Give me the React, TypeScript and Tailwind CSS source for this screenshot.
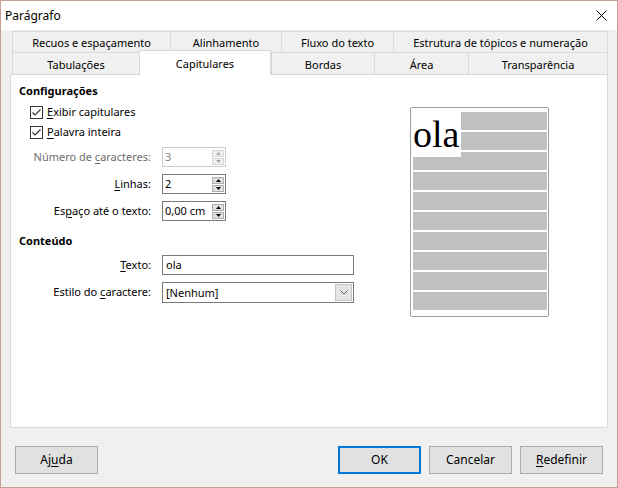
import React from 'react';

const row1 = [
  { label: 'Recuos e espaçamento', w: 'w-[158px]' },
  { label: 'Alinhamento', w: 'w-[111px]' },
  { label: 'Fluxo do texto', w: 'w-[112px]' },
  { label: 'Estrutura de tópicos e numeração', w: 'w-[215px]' }
];

const row2 = [
  { label: 'Tabulações', w: 'w-[127px]' },
  { label: 'Capitulares', w: 'w-[132px]', active: true },
  { label: 'Bordas', w: 'w-[103px]' },
  { label: 'Área', w: 'w-[94px]' },
  { label: 'Transparência', w: 'w-[140px]' }
];

function Arrow({ up, disabled }: { up?: boolean; disabled?: boolean }) {
  return (
    <svg width="5" height="3" viewBox="0 0 5 3">
      <path
        d={up ? 'M0 3 L2.5 0 L5 3 Z' : 'M0 0 L2.5 3 L5 0 Z'}
        fill={disabled ? '#a8a8a8' : '#000'}
      />
    </svg>
  );
}

function Spin({ value, disabled }: { value: string; disabled?: boolean }) {
  const half = disabled
    ? 'flex h-[7px] items-center justify-center border border-[#d5d5d5] bg-[#f0f0f0]'
    : 'flex h-[7px] items-center justify-center border border-[#adadad] bg-[#e1e1e1]';
  return (
    <div
      className={
        disabled
          ? 'flex h-[20px] w-[64px] border border-[#cccccc] bg-white text-[#838383]'
          : 'flex h-[20px] w-[64px] border border-[#7a7a7a] bg-white'
      }
    >
      <span className="flex-1 pl-[2px] leading-[18px]">{value}</span>
      <div className="flex w-[13px] flex-col justify-center gap-[1px] pr-[1px]">
        <div className={half}>
          <Arrow up disabled={disabled} />
        </div>
        <div className={half}>
          <Arrow disabled={disabled} />
        </div>
      </div>
    </div>
  );
}

function Check({ children }: { children: React.ReactNode }) {
  return (
    <div className="flex h-[20px] items-center gap-[4px] pl-[11px]">
      <div className="flex h-[13px] w-[13px] items-center justify-center border border-[#333] bg-white">
        <svg width="11" height="11" viewBox="0 0 11 11">
          <path d="M1.5 5.5 L4 8 L9.5 2.5" fill="none" stroke="#333" strokeWidth="1.2" />
        </svg>
      </div>
      <span>{children}</span>
    </div>
  );
}

function Field({
  label,
  children,
  className,
  muted
}: {
  label: React.ReactNode;
  children: React.ReactNode;
  className: string;
  muted?: boolean;
}) {
  return (
    <div className={'flex items-center ' + className}>
      <span
        className={
          muted
            ? 'w-[132px] text-right text-[#6d6d6d]'
            : 'w-[132px] text-right'
        }
      >
        {label}
      </span>
      <div className="ml-[11px]">{children}</div>
    </div>
  );
}

function Button({
  children,
  primary
}: {
  children: React.ReactNode;
  primary?: boolean;
}) {
  return (
    <div
      className={
        primary
          ? 'flex h-[28px] w-[83px] items-center justify-center border-2 border-[#0078d7] bg-[#e1e1e1]'
          : 'flex h-[28px] w-[83px] items-center justify-center border border-[#adadad] bg-[#e1e1e1]'
      }
    >
      {children}
    </div>
  );
}

const bars = [0, 1, 2, 3, 4, 5, 6, 7, 8, 9];

export default function App() {
  return (
    <div className="flex h-[488px] w-[618px] flex-col border border-[#c6a097] bg-[#f0f0f0] font-['Noto_Sans',sans-serif] text-[11px] text-black">
      {/* title bar */}
      <div className="flex h-[29px] shrink-0 items-center justify-between bg-white pl-[4px] pr-[10px] text-[12px]">
        <span>Parágrafo</span>
        <svg width="11" height="11" viewBox="0 0 11 11">
          <path d="M0.5 0.5 L10.5 10.5 M10.5 0.5 L0.5 10.5" stroke="#000" strokeWidth="1" />
        </svg>
      </div>

      <div className="px-[9px] pt-[1px]">
        {/* tabs */}
        <div className="ml-[2px] flex h-[21px]">
          {row1.map((t, i) => (
            <div
              key={t.label}
              className={
                (i === row1.length - 1 ? 'border-r ' : '') +
                'flex items-center justify-center border-l border-t border-[#d9d9d9] pt-[3px] ' +
                t.w
              }
            >
              {t.label}
            </div>
          ))}
        </div>
        <div className="ml-[2px] flex h-[22px]">
          {row2.map((t, i) =>
            t.active ? (
              <div
                key={t.label}
                className={
                  'relative z-10 -mb-px -mt-[2px] flex h-[25px] items-start justify-center border-x border-t border-[#d9d9d9] bg-white pt-[5px] ' +
                  t.w
                }
              >
                {t.label}
              </div>
            ) : (
              <div
                key={t.label}
                className={
                  (i === row2.length - 1 ? 'border-r ' : '') +
                  'flex items-center justify-center border-l border-t border-[#d9d9d9] pt-[3px] ' +
                  t.w
                }
              >
                {t.label}
              </div>
            )
          )}
        </div>

        {/* panel */}
        <div className="flex h-[354px] border border-[#d9d9d9] bg-white">
          <div className="flex w-[399px] flex-col pl-[8px] pt-[8px]">
            <div className="h-[16px] font-bold leading-[16px]">Configurações</div>
            <div className="mt-[3px]">
              <Check>
                <span className="underline underline-offset-2">E</span>xibir capitulares
              </Check>
              <Check>
                <span className="underline underline-offset-2">P</span>alavra inteira
              </Check>
            </div>
            <Field
              className="mt-[5px] h-[20px]"
              muted
              label={
                <>
                  Número de <span className="underline underline-offset-2">c</span>aracteres:
                </>
              }
            >
              <Spin value="3" disabled />
            </Field>
            <Field
              className="mt-[7px] h-[20px]"
              label={
                <>
                  <span className="underline underline-offset-2">L</span>inhas:
                </>
              }
            >
              <Spin value="2" />
            </Field>
            <Field
              className="mt-[7px] h-[20px]"
              label={
                <>
                  Es<span className="underline underline-offset-2">p</span>aço até o texto:
                </>
              }
            >
              <Spin value="0,00 cm" />
            </Field>

            <div className="mt-[12px] h-[16px] font-bold leading-[16px]">Conteúdo</div>
            <Field
              className="mt-[6px] h-[20px]"
              label={
                <>
                  <span className="underline underline-offset-2">T</span>exto:
                </>
              }
            >
              <div className="flex h-[20px] w-[192px] items-center border border-[#7a7a7a] bg-white pl-[3px]">
                ola
              </div>
            </Field>
            <Field
              className="mt-[7px] h-[21px]"
              label={
                <>
                  Estilo do <span className="underline underline-offset-2">c</span>aractere:
                </>
              }
            >
              <div className="flex h-[21px] w-[192px] border border-[#7a7a7a] bg-white">
                <span className="flex-1 pl-[3px] leading-[19px]">[Nenhum]</span>
                <div className="my-[1px] mr-[1px] flex w-[17px] items-center justify-center border border-[#c4c4c4] bg-[#e5e5e5]">
                  <svg width="8" height="5" viewBox="0 0 8 5">
                    <path d="M0.5 0.5 L4 4 L7.5 0.5" fill="none" stroke="#606060" strokeWidth="1" />
                  </svg>
                </div>
              </div>
            </Field>
          </div>

          {/* preview */}
          <div className="mt-[32px] h-[210px] w-[139px] rounded-[2px] border border-[#a0a0a0] bg-white pb-[5px] pl-[2px] pr-[1px] pt-[4px]">
            <div className="relative flex flex-col gap-[2px]">
              {bars.map((b) => (
                <div
                  key={b}
                  className={
                    b < 2 ? 'ml-[48px] h-[18px] bg-[#c0c0c0]' : 'h-[18px] bg-[#c0c0c0]'
                  }
                />
              ))}
              <div className="absolute left-0 top-0 h-[45px] w-[48px] bg-white font-['Liberation_Serif',serif] text-[38px] leading-[45px]">
                ola
              </div>
            </div>
          </div>
        </div>
      </div>

      {/* buttons */}
      <div className="mt-[18px] flex px-[14px] text-[12px]">
        <Button>
          Aj<span className="underline underline-offset-2">u</span>da
        </Button>
        <div className="ml-auto flex gap-[8px]">
          <Button primary>OK</Button>
          <Button>Cancelar</Button>
          <Button>
            <span className="underline underline-offset-2">R</span>edefinir
          </Button>
        </div>
      </div>
    </div>
  );
}
